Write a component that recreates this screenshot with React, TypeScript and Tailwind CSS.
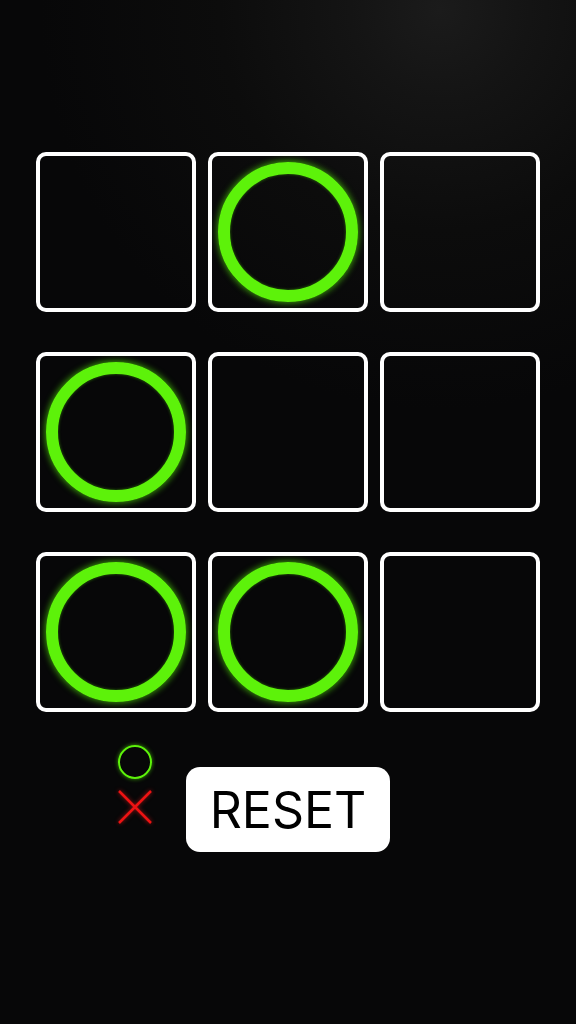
import React from "react";

const board: ("O" | null)[] = [null, "O", null, "O", null, null, "O", "O", null];

function Ring() {
  return (
    <div className="w-[140px] h-[140px] rounded-full border-[12px] border-[#5df20a] shadow-[0_0_6px_1px_rgba(80,220,10,0.7),inset_0_0_3px_rgba(80,220,10,0.5)]" />
  );
}

export default function App() {
  return (
    <div className="w-[576px] h-[1024px] overflow-hidden bg-[#070708] bg-[radial-gradient(circle_at_440px_10px,#1b1b1b_0px,#141414_90px,#0c0c0c_220px,#070708_400px)] flex flex-col items-center font-['Inter','Liberation_Sans',sans-serif]">
      <div className="mt-[152px] grid grid-cols-[160px_160px_160px] gap-x-[12px] gap-y-[40px]">
        {board.map((v, i) => (
          <div
            key={i}
            className="w-[160px] h-[160px] rounded-[10px] border-[4px] border-white flex items-center justify-center"
          >
            {v === "O" && <Ring />}
          </div>
        ))}
      </div>
      <div className="mt-[33px] w-full grid grid-cols-[1fr_auto_1fr]">
        <div className="flex justify-end pr-[33px]">
          <div className="flex flex-col items-center gap-[10px]">
            <div className="w-[34px] h-[34px] rounded-full border-[2.5px] border-[#5df20a] shadow-[0_0_4px_rgba(80,220,10,0.7)]" />
            <svg width="36" height="36" viewBox="0 0 36 36" className="drop-shadow-[0_0_2px_rgba(255,20,20,0.6)]">
              <path d="M2 2 L34 34 M34 2 L2 34" stroke="#ec1313" strokeWidth="2.5" fill="none" />
            </svg>
          </div>
        </div>
        <button className="mt-[22px] w-[204px] h-[85px] rounded-[14px] bg-white text-black text-[50px] leading-none font-normal flex items-center justify-center">
          RESET
        </button>
        <div />
      </div>
    </div>
  );
}
